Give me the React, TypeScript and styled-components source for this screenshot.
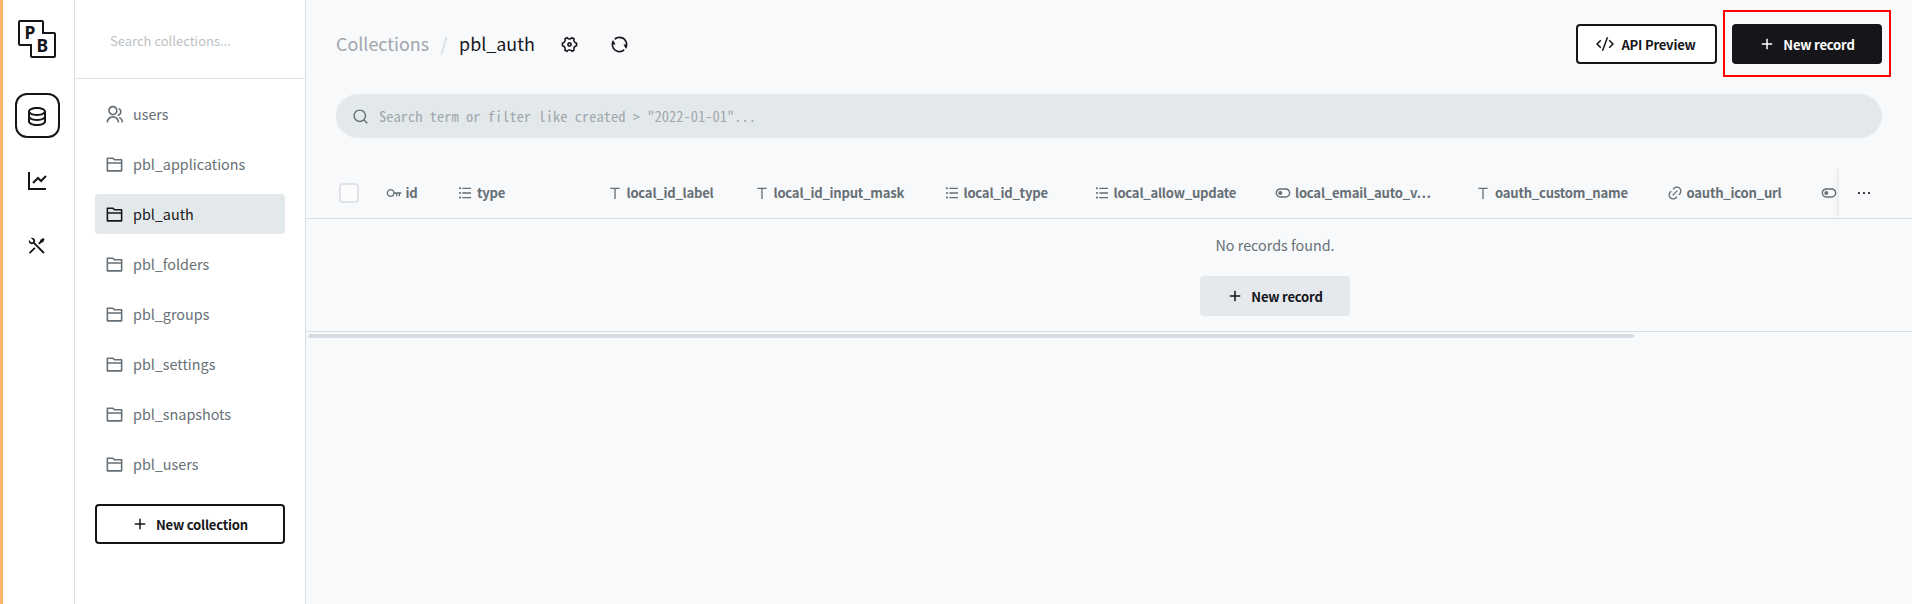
import React from "react";
import styled, { createGlobalStyle, css } from "styled-components";
import {
  RiDatabase2Line,
  RiLineChartLine,
  RiToolsLine,
  RiGroupLine,
  RiFolder2Line,
  RiAddLine,
  RiSettings4Line,
  RiRefreshLine,
  RiCodeSSlashLine,
  RiSearchLine,
  RiKeyLine,
  RiListUnordered,
  RiText,
  RiToggleLine,
  RiLink,
  RiMoreLine,
} from "react-icons/ri";

const Global = createGlobalStyle`
  * { box-sizing: border-box; }
  body {
    margin: 0;
    background: #f8f9fb;
    color: #16161a;
    font-family: "Noto Sans CJK SC", "Noto Sans", sans-serif;
    font-size: 14.35px;
    line-height: 24px;
  }
  svg { display: block; flex-shrink: 0; }
`;

const Layout = styled.div`
  display: flex;
  height: 604px;
  overflow: hidden;
  border-left: 3px solid #ffb56b;
`;

const AppNav = styled.nav`
  width: 72px;
  flex-shrink: 0;
  display: flex;
  flex-direction: column;
  align-items: center;
  padding: 19px 2px 0 0;
  background: #fff;
  border-right: 1px solid #d7dde6;
`;

const Logo = styled.svg`
  margin: 0 1px 34px 0;
`;

const NavItem = styled.a<{ $active?: boolean }>`
  display: flex;
  align-items: center;
  justify-content: center;
  width: 45px;
  height: 45px;
  margin-bottom: 20px;
  padding-right: 1px;
  border-radius: 12px;
  border: 2px solid ${(p) => (p.$active ? "#16161a" : "transparent")};
`;

const Sidebar = styled.aside`
  width: 231px;
  flex-shrink: 0;
  display: flex;
  flex-direction: column;
  background: #fff;
  border-right: 1px solid #d7dde6;
`;

const SidebarSearch = styled.div`
  height: 79px;
  padding: 29px 0 0 35px;
  border-bottom: 1px solid #dfe6ea;
  color: #bcbfc5;
  font-size: 13px;
`;

const CollectionList = styled.div`
  display: flex;
  flex-direction: column;
  gap: 10px;
  padding: 15px 20px 20px;
`;

const Collection = styled.a<{ $active?: boolean }>`
  display: flex;
  align-items: center;
  gap: 9px;
  height: 40px;
  padding: 0 10px;
  border-radius: 4px;
  color: ${(p) => (p.$active ? "#16161a" : "#666f75")};
  background: ${(p) => (p.$active ? "#e3e9eb" : "transparent")};
`;

const ListFooter = styled.div`
  margin-top: 10px;
`;

const Button = styled.button<{ $kind: "outline" | "solid" | "secondary"; $width: number }>`
  display: flex;
  align-items: center;
  justify-content: center;
  gap: 7px;
  width: ${(p) => p.$width}px;
  height: 40px;
  padding: 0 1px 0 0;
  border: 2px solid #16161a;
  border-radius: 4px;
  font-family: inherit;
  font-size: 13.1px;
  font-weight: 600;
  letter-spacing: -0.22px;
  color: #16161a;
  background: #fff;
  ${(p) =>
    p.$kind === "solid" &&
    css`
      color: #fff;
      background: #16161a;
    `}
  ${(p) =>
    p.$kind === "secondary" &&
    css`
      background: #e5e9ee;
      border-color: #e5e9ee;
    `}
`;

const Main = styled.main`
  flex: 1;
  min-width: 0;
  display: flex;
  flex-direction: column;
`;

const PageHeader = styled.header`
  display: flex;
  align-items: center;
  height: 40px;
  margin: 24px 30px 30px;
`;

const Crumbs = styled.div`
  display: flex;
  padding-bottom: 2px;
  font-size: 17.9px;
  color: #a0a6ac;
`;

const Slash = styled.span`
  width: 30px;
  text-align: center;
  color: #d2d6dc;
`;

const Current = styled.span`
  color: #16161a;
`;

const HeaderIcons = styled.div`
  display: flex;
  gap: 31px;
  margin-left: 25px;
`;

const HeaderActions = styled.div`
  display: flex;
  gap: 15px;
  margin-left: auto;
`;

const Highlighted = styled.div`
  position: relative;
  &::after {
    content: "";
    position: absolute;
    inset: -14px -9px -13px;
    border: 2px solid #f00;
  }
`;

const SearchBar = styled.div`
  display: flex;
  align-items: center;
  gap: 10px;
  height: 44px;
  margin: 0 30px 30px;
  padding-left: 16px;
  border-radius: 22px;
  background: #e3e9eb;
  color: #666f75;
`;

const Placeholder = styled.span`
  font-family: "Noto Sans Mono CJK SC", "Liberation Mono", monospace;
  font-size: 14.5px;
  color: #a0a6ac;
  white-space: pre;
`;

const TableHead = styled.div`
  display: flex;
  height: 51px;
  overflow: hidden;
  border-bottom: 1px solid #d7dde6;
  color: #666f75;
  font-size: 13.1px;
  font-weight: 600;
  letter-spacing: -0.23px;
`;

const CheckCell = styled.div`
  display: flex;
  align-items: center;
  width: 79.5px;
  flex-shrink: 0;
  padding-left: 33px;
`;

const Checkbox = styled.span`
  width: 20px;
  height: 20px;
  border: 2px solid #dfe3e8;
  border-radius: 4px;
  background: #fcfcfd;
`;

const HeadCell = styled.div<{ $width: number }>`
  display: flex;
  align-items: center;
  gap: 4px;
  width: ${(p) => p.$width}px;
  flex-shrink: 0;
  white-space: nowrap;
`;

const MoreCell = styled.div`
  display: flex;
  align-items: center;
  width: 73px;
  flex-shrink: 0;
  padding-left: 17px;
  color: #16161a;
  background: #f8f9fb;
  box-shadow: 0 0 6px rgba(0, 0, 0, 0.12);
`;

const TableScroll = styled.div`
  height: 113px;
  overflow: hidden;
  border-bottom: 1px solid #d7dde6;
`;

const Empty = styled.div`
  display: flex;
  flex-direction: column;
  align-items: center;
  gap: 19px;
  width: 1938px;
  padding-top: 14px;
  color: #666f75;
`;

const ScrollThumb = styled.div`
  width: 1326px;
  height: 4px;
  margin: 2px 0 0 2px;
  border-radius: 2px;
  background: #d5dce4;
`;

const COLLECTIONS = [
  "pbl_applications",
  "pbl_auth",
  "pbl_folders",
  "pbl_groups",
  "pbl_settings",
  "pbl_snapshots",
  "pbl_users",
];

const COLUMNS = [
  { name: "id", icon: RiKeyLine, width: 71.5 },
  { name: "type", icon: RiListUnordered, width: 149.5 },
  { name: "local_id_label", icon: RiText, width: 147 },
  { name: "local_id_input_mask", icon: RiText, width: 190 },
  { name: "local_id_type", icon: RiListUnordered, width: 150 },
  { name: "local_allow_update", icon: RiListUnordered, width: 181.5 },
  { name: "local_email_auto_v…", icon: RiToggleLine, width: 200 },
  { name: "oauth_custom_name", icon: RiText, width: 191.5 },
  { name: "oauth_icon_url", icon: RiLink, width: 154 },
  { name: "", icon: RiToggleLine, width: 18.5 },
];

export default function App() {
  return (
    <>
      <Global />
      <Layout>
        <AppNav>
          <Logo width="40" height="40" viewBox="0 0 40 40">
            <path
              d="M3 2h22a1 1 0 0 1 1 1v11h11a1 1 0 0 1 1 1v22a1 1 0 0 1-1 1H15a1 1 0 0 1-1-1V26H3a1 1 0 0 1-1-1V3a1 1 0 0 1 1-1z"
              fill="none"
              stroke="#16161a"
              strokeWidth="2"
            />
            <text x="7.5" y="20" fontSize="17.5" fontWeight="700" fontFamily="Noto Sans" fill="#16161a">P</text>
            <text x="19.5" y="33" fontSize="17.5" fontWeight="700" fontFamily="Noto Sans" fill="#16161a">B</text>
          </Logo>
          <NavItem $active><RiDatabase2Line size={24} /></NavItem>
          <NavItem><RiLineChartLine size={24} /></NavItem>
          <NavItem><RiToolsLine size={22} /></NavItem>
        </AppNav>
        <Sidebar>
          <SidebarSearch>Search collections...</SidebarSearch>
          <CollectionList>
            <Collection><RiGroupLine size={19} />users</Collection>
            {COLLECTIONS.map((name) => (
              <Collection key={name} $active={name === "pbl_auth"}>
                <RiFolder2Line size={19} />
                {name}
              </Collection>
            ))}
            <ListFooter>
              <Button $kind="outline" $width={190}><RiAddLine size={18} />New collection</Button>
            </ListFooter>
          </CollectionList>
        </Sidebar>
        <Main>
          <PageHeader>
            <Crumbs>
              Collections<Slash>/</Slash><Current>pbl_auth</Current>
            </Crumbs>
            <HeaderIcons>
              <RiSettings4Line size={19} />
              <RiRefreshLine size={19} />
            </HeaderIcons>
            <HeaderActions>
              <Button $kind="outline" $width={141}><RiCodeSSlashLine size={18} />API Preview</Button>
              <Highlighted>
                <Button $kind="solid" $width={150}><RiAddLine size={18} />New record</Button>
              </Highlighted>
            </HeaderActions>
          </PageHeader>
          <SearchBar>
            <RiSearchLine size={17} />
            <Placeholder>{'Search term or filter like created > "2022-01-01"...'}</Placeholder>
          </SearchBar>
          <TableHead>
            <CheckCell><Checkbox /></CheckCell>
            {COLUMNS.map(({ name, icon: Icon, width }, i) => (
              <HeadCell key={i} $width={width}><Icon size={16} />{name}</HeadCell>
            ))}
            <MoreCell><RiMoreLine size={16} /></MoreCell>
          </TableHead>
          <TableScroll>
            <Empty>
              No records found.
              <Button $kind="secondary" $width={150}><RiAddLine size={18} />New record</Button>
            </Empty>
          </TableScroll>
          <ScrollThumb />
        </Main>
      </Layout>
    </>
  );
}
